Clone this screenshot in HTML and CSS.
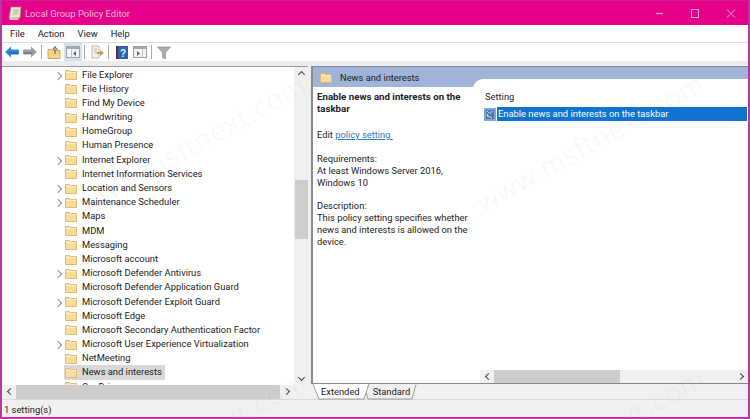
FILE: index.html
```html
<!DOCTYPE html>
<html lang="en">
<head>
    <meta charset="UTF-8">
    <title>Local Group Policy Editor</title>
    <link rel="stylesheet" href="styles.css">
</head>
<body>
<svg class="defs" width="0" height="0">
    <symbol id="folder" viewBox="0 0 12 11">
        <path d="M.5 1.500h4l1 1h6v8h-11z" fill="#f9dc97" stroke="#dcbc78"/>
        <path d="M1 3.500h10" stroke="#fdeec6"/>
    </symbol>
</svg>
<div class="window">
    <header class="titlebar">
        <svg class="app-icon" width="14" height="15" viewBox="0 0 14 15">
            <path d="M3 1h10l-1 11H1z" fill="#ece6d2" stroke="#948e7a" stroke-width=".8"/>
            <path d="M1 12h9l1 2H2z" fill="#cfc8b0"/>
            <path d="M5 4h6M5 6h6M4.500 8h5" stroke="#a29c86" stroke-width=".8"/>
        </svg>
        <span class="title">Local Group Policy Editor</span>
        <div class="controls">
            <svg width="36" height="24" viewBox="0 0 36 24"><path d="M16 12.500h7" stroke="#f3a8d4" stroke-width="1.200"/></svg>
            <svg width="36" height="24" viewBox="0 0 36 24"><rect x="15.500" y="8.500" width="7" height="8" fill="none" stroke="#f3a8d4"/></svg>
            <svg width="36" height="24" viewBox="0 0 36 24"><path d="M15 8.500l8 8M23 8.500l-8 8" stroke="#f3a8d4"/></svg>
        </div>
    </header>

    <nav class="menubar">
        <span>File</span><span>Action</span><span>View</span><span>Help</span>
    </nav>

    <div class="toolbar">
        <button class="tool"><svg width="14" height="12" viewBox="0 0 14 12"><path d="M0 6l6-5.500V3.500h7q1 0 1 1v3q0 1-1 1H6v3z" fill="#2f8ad6"/><path d="M3 6h10v2H6z" fill="#1f6cb0"/></svg></button>
        <button class="tool"><svg width="14" height="12" viewBox="0 0 14 12"><path d="M14 6L8 .5V3.500H1q-1 0-1 1v3q0 1 1 1h7v3z" fill="#9aa0a5"/><path d="M11 6H1v2h7z" fill="#777d82"/></svg></button>
        <i class="sep"></i>
        <button class="tool"><svg width="14" height="14" viewBox="0 0 14 14"><path d="M1 4.500h4l1 1h7v8H1z" fill="#f4d288" stroke="#b98f3c" stroke-width=".7"/><path d="M8 9V2.500M5.500 5L8 1.500 10.500 5" fill="none" stroke="#5e5440" stroke-width="1"/></svg></button>
        <button class="tool active"><svg width="14" height="12" viewBox="0 0 14 12"><rect x=".5" y=".5" width="13" height="11" fill="#f4f4f4" stroke="#a0a0a0"/><path d="M1 1h12v2H1z" fill="#a8a8a8"/><path d="M5.500 3.500v8" stroke="#c0c0c0"/><path d="M10 5v5L7 7.500z" fill="#666"/></svg></button>
        <i class="sep"></i>
        <button class="tool"><svg width="14" height="14" viewBox="0 0 14 14"><path d="M2 1h7v12H2z" fill="#f7f3e6" stroke="#a8a08c" stroke-width=".7"/><path d="M4 4h3M4 6h3M4 8h3" stroke="#a8a08c" stroke-width=".7"/><path d="M7 7h3V5l4 3-4 3V9H7z" fill="#c89a4a"/></svg></button>
        <i class="sep"></i>
        <button class="tool help"><svg width="13" height="15" viewBox="0 0 13 15"><path d="M1 1h12v13H1z" fill="#2a64b0"/><path d="M1 1h2v13H1z" fill="#6e2430"/><text x="5" y="11.500" font-size="10" font-family="Liberation Sans, sans-serif" font-weight="700" fill="#e8f0ff">?</text></svg></button>
        <button class="tool"><svg width="14" height="12" viewBox="0 0 14 12"><rect x=".5" y=".5" width="13" height="11" fill="#f4f4f4" stroke="#a0a0a0"/><path d="M1 1h12v2H1z" fill="#a8a8a8"/><path d="M9.500 3.500v8" stroke="#c0c0c0"/><path d="M4 5v5l3-2.500z" fill="#666"/></svg></button>
        <i class="sep"></i>
        <button class="tool"><svg width="14" height="13" viewBox="0 0 14 13"><path d="M.5 1h13L8.500 6.500V13l-3-1.500v-5z" fill="#a3acb1" stroke="#7d868b" stroke-width=".6"/></svg></button>
    </div>

    <main class="panes">
        <section class="tree-pane">
            <div class="tree-body">
                <ul class="tree">
                    <li class="has-kids"><svg class="folder"><use href="#folder"/></svg>File Explorer</li>
                    <li><svg class="folder"><use href="#folder"/></svg>File History</li>
                    <li><svg class="folder"><use href="#folder"/></svg>Find My Device</li>
                    <li><svg class="folder"><use href="#folder"/></svg>Handwriting</li>
                    <li><svg class="folder"><use href="#folder"/></svg>HomeGroup</li>
                    <li><svg class="folder"><use href="#folder"/></svg>Human Presence</li>
                    <li class="has-kids"><svg class="folder"><use href="#folder"/></svg>Internet Explorer</li>
                    <li><svg class="folder"><use href="#folder"/></svg>Internet Information Services</li>
                    <li class="has-kids"><svg class="folder"><use href="#folder"/></svg>Location and Sensors</li>
                    <li class="has-kids"><svg class="folder"><use href="#folder"/></svg>Maintenance Scheduler</li>
                    <li><svg class="folder"><use href="#folder"/></svg>Maps</li>
                    <li><svg class="folder"><use href="#folder"/></svg>MDM</li>
                    <li><svg class="folder"><use href="#folder"/></svg>Messaging</li>
                    <li><svg class="folder"><use href="#folder"/></svg>Microsoft account</li>
                    <li class="has-kids"><svg class="folder"><use href="#folder"/></svg>Microsoft Defender Antivirus</li>
                    <li><svg class="folder"><use href="#folder"/></svg>Microsoft Defender Application Guard</li>
                    <li class="has-kids"><svg class="folder"><use href="#folder"/></svg>Microsoft Defender Exploit Guard</li>
                    <li><svg class="folder"><use href="#folder"/></svg>Microsoft Edge</li>
                    <li><svg class="folder"><use href="#folder"/></svg>Microsoft Secondary Authentication Factor</li>
                    <li class="has-kids"><svg class="folder"><use href="#folder"/></svg>Microsoft User Experience Virtualization</li>
                    <li><svg class="folder"><use href="#folder"/></svg>NetMeeting</li>
                    <li class="selected"><svg class="folder"><use href="#folder"/></svg>News and interests</li>
                    <li><svg class="folder"><use href="#folder"/></svg>OneDrive</li>
                </ul>
                <div class="vscroll">
                    <span class="arrow up"></span>
                    <div class="vtrack"><div class="vthumb"></div></div>
                    <span class="arrow down"></span>
                </div>
            </div>
            <div class="hscroll">
                <span class="arrow left"></span>
                <div class="htrack"></div>
                <span class="arrow right"></span>
                <div class="corner"></div>
            </div>
        </section>

        <section class="detail-pane">
            <div class="detail-frame">
                <div class="detail-head">
                    <svg class="folder big"><use href="#folder"/></svg>
                    <span>News and interests</span>
                </div>
                <div class="detail-body">
                    <div class="desc">
                        <p class="desc-title">Enable news and interests on the taskbar</p>
                        <p>Edit <a href="#">policy setting&nbsp;</a></p>
                        <p class="req">Requirements:<br>At least Windows Server 2016, Windows 10</p>
                        <p>Description:<br>This policy setting specifies whether news and interests is allowed on the device.</p>
                    </div>
                    <div class="settings">
                        <div class="col-head">Setting</div>
                        <div class="setting-row">
                            <svg width="12" height="13" viewBox="0 0 12 13"><rect width="12" height="13" fill="#7fa6d6"/><path d="M2 2h8v9H2z" fill="#4f79ad"/><path d="M3 3l2 2M8 3L6 6M4 8l4 2M3 6l1 3" stroke="#dbe6f2"/></svg>
                            <span class="setting-name">Enable news and interests on the taskbar</span>
                        </div>
                        <div class="settings-fill"></div>
                        <div class="detail-scroll">
                            <span class="arrow left"></span>
                            <div class="dtrack"><div class="dthumb"></div></div>
                            <span class="arrow right"></span>
                        </div>
                    </div>
                </div>
            </div>
            <div class="tabs">
                <svg class="tab-shape" width="110" height="16" viewBox="0 0 110 16">
                    <path d="M55 .5l4 14.500h44l4-14.500" fill="#f0f0f0" stroke="#8a8a8a" stroke-width=".8" transform="translate(-3 0)"/>
                    <path d="M1 0l6 15h45l5-15" fill="#fff" stroke="#8a8a8a" stroke-width=".8"/>
                </svg>
                <span class="tab">Extended</span>
                <span class="tab">Standard</span>
            </div>
        </section>
    </main>

    <footer class="statusbar">1 setting(s)</footer>
    <div class="watermark one">www.msftnext.com</div>
    <div class="watermark two">www.msftnext.com</div>
    <div class="watermark three">www.msftnext.com</div>
    <div class="watermark four">www.msftnext.com</div>
</div>
</body>
</html>
```
FILE: styles.css
```css
html, body { margin: 0; height: 100%; overflow: hidden; }
* { box-sizing: border-box; }
body {
    font-family: Roboto, "Open Sans", sans-serif;
    font-size: 9.35px;
    color: #222;
}
.defs { position: absolute; }
.window {
    position: relative;
    width: 750px;
    height: 419px;
    display: flex;
    flex-direction: column;
    background: #f0f0f0;
    border: 2px solid #b9389f;
    border-top: 1px solid #c9209a;
    overflow: hidden;
}

.titlebar {
    height: 24px;
    flex: none;
    display: flex;
    align-items: center;
    background: #e6008a;
    color: #f7bcdf;
    padding-left: 6px;
}
.app-icon { margin-right: 3px; }
.title { font-size: 9.45px; }
.controls { margin-left: auto; display: flex; }

.menubar {
    height: 18px;
    flex: none;
    display: flex;
    align-items: center;
    gap: 13px;
    padding-left: 8px;
    background: #fff;
    border-bottom: 1px solid #dcdcdc;
}
.toolbar {
    height: 18px;
    flex: none;
    display: flex;
    align-items: center;
    padding-left: 1px;
    background: #fff;
}
.tool {
    width: 18px;
    height: 18px;
    padding: 0;
    border: 0;
    background: none;
    display: flex;
    align-items: center;
    justify-content: center;
}
.tool.active { background: #cfe3f2; margin-left: 1px; }
.tool.help { margin-right: 1px; }
.sep { width: 1px; height: 14px; margin: 0 3px 0 2px; background: #a9a9a9; }

.panes {
    flex: 1;
    min-height: 0;
    display: flex;
    border-top: 5px solid #ececec;
    background: #f0f0f0;
}
.tree-pane {
    width: 306px;
    flex: none;
    display: flex;
    flex-direction: column;
    border-top: 1px solid #9a9a9a;
    background: #fff;
}
.tree-body { flex: 1; min-height: 0; display: flex; }
.tree {
    flex: 1;
    min-width: 0;
    margin: 0;
    padding: 0.5px 0 0 62px;
    list-style: none;
    overflow: hidden;
}
.tree li {
    position: relative;
    display: flex;
    align-items: center;
    height: 14.2px;
    line-height: 14.2px;
    width: max-content;
    white-space: nowrap;
}
.folder { width: 12px; height: 11px; margin: 0 5px 0 1px; flex: none; }
.tree li.has-kids::before {
    content: "";
    position: absolute;
    left: -9px;
    top: 5px;
    width: 5px;
    height: 5px;
    border-top: 1px solid #8f8f8f;
    border-right: 1px solid #8f8f8f;
    transform: rotate(45deg);
}
.tree li.selected { background: #d9d9d9; padding-right: 3px; }

.vscroll {
    width: 14px;
    flex: none;
    display: flex;
    flex-direction: column;
    background: #f0f0f0;
}
.arrow {
    flex: none;
    height: 13px;
    width: 14px;
    display: flex;
    align-items: center;
    justify-content: center;
}
.arrow::before {
    content: "";
    width: 4px;
    height: 4px;
    border-top: 1.5px solid #444;
    border-right: 1.5px solid #444;
}
.arrow.up::before { transform: translateY(1px) rotate(-45deg); }
.arrow.down::before { transform: translateY(-1px) rotate(135deg); }
.arrow.left::before { transform: translateX(1px) rotate(-135deg); }
.arrow.right::before { transform: translateX(-1px) rotate(45deg); }
.vtrack { flex: 1; padding-top: 100px; }
.vthumb { height: 59px; margin-left: 1px; background: #cdcdcd; }
.hscroll { height: 14px; flex: none; display: flex; background: #f0f0f0; }
.htrack { flex: 1; background: #cdcdcd; }
.corner { width: 14px; }

.detail-pane {
    flex: 1;
    min-width: 0;
    display: flex;
    flex-direction: column;
    padding-left: 3px;
}
.detail-frame {
    flex: 1;
    min-height: 0;
    display: flex;
    flex-direction: column;
    border-top: 1px solid #7f8ea8;
    border-left: 2px solid #8a8a8a;
    border-bottom: 1px solid #8a8a8a;
    background: #fff;
}
.detail-head {
    height: 20px;
    flex: none;
    display: flex;
    align-items: center;
    padding-left: 7px;
    background: #9fb4d8;
    font-size: 9.3px;
}
.folder.big { margin: 0 8px 0 0; }
.detail-body { flex: 1; min-height: 0; display: flex; }
.desc { width: 160px; flex: none; padding: 4px 4px 0; line-height: 12px; }
.desc p { margin: 0 0 12px; }
.desc .desc-title { font-size: 9.7px; font-weight: 700; margin-bottom: 14px; }
.desc .req { margin-bottom: 11px; }
.desc a { color: #2b7cc4; }
.settings {
    flex: 1;
    min-width: 0;
    display: flex;
    flex-direction: column;
    margin-top: -8px;
    background: #fff;
    border-radius: 10px 0 0 0;
    padding-top: 11px;
}
.col-head { height: 14px; line-height: 14px; margin-left: 12px; }
.setting-row { display: flex; align-items: center; gap: 1px; margin: 3px 1px 0 11px; height: 14px; }
.setting-name {
    flex: 1;
    height: 14px;
    line-height: 14px;
    padding-left: 1px;
    background: #0e74cf;
    color: #fff;
}
.settings-fill { flex: 1; }
.detail-scroll { height: 13px; flex: none; display: flex; margin-left: 7px; background: #f0f0f0; }
.dtrack { flex: 1; }
.dthumb { width: 52.500%; height: 100%; background: #cdcdcd; }

.tabs { position: relative; height: 15px; flex: none; display: flex; padding-left: 10px; }
.tab-shape { position: absolute; left: 1px; top: 0; }
.tab { position: relative; line-height: 15px; margin-right: 13px; }

.statusbar {
    height: 18px;
    flex: none;
    line-height: 19px;
    padding-left: 2px;
    border-top: 1px solid #d9d9d9;
    background: #f0f0f0;
}
.watermark {
    position: absolute;
    font-size: 27px;
    font-family: "Open Sans", sans-serif;
    font-weight: 300;
    letter-spacing: 1.500px;
    color: rgba(120, 120, 120, .08);
    white-space: nowrap;
    transform-origin: 0 100%;
    transform: rotate(-29deg);
    pointer-events: none;
}
.watermark.one { left: 486px; top: 182px; }
.watermark.two { left: 88px; top: 184px; }
.watermark.three { left: 486px; top: 477px; }
.watermark.four { left: 88px; top: 479px; }
```
